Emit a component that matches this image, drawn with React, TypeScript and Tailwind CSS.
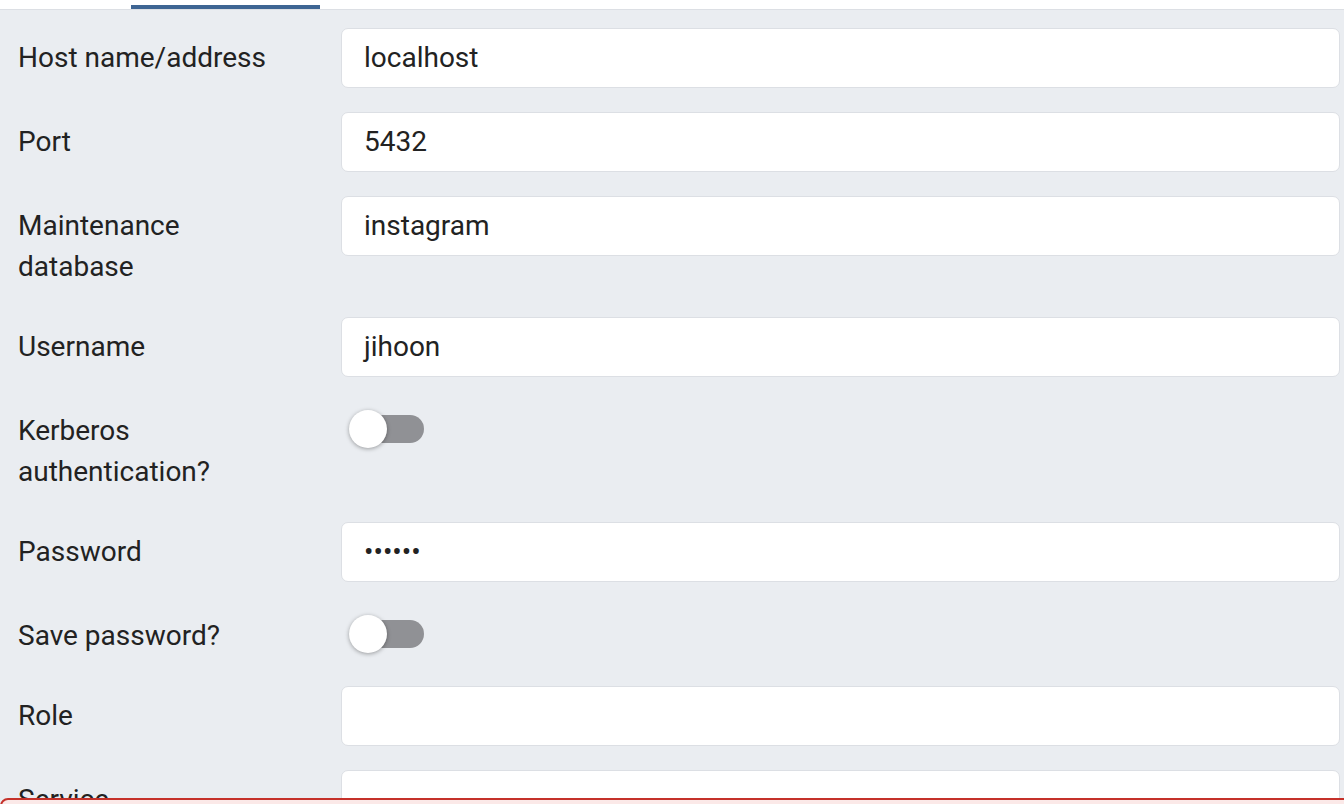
import React from "react";

type Row =
  | { kind: "input"; label: string; value: string }
  | { kind: "switch"; label: string };

const ROWS: Row[] = [
  { kind: "input", label: "Host name/address", value: "localhost" },
  { kind: "input", label: "Port", value: "5432" },
  { kind: "input", label: "Maintenance database", value: "instagram" },
  { kind: "input", label: "Username", value: "jihoon" },
  { kind: "switch", label: "Kerberos authentication?" },
  { kind: "input", label: "Password", value: "••••••" },
  { kind: "switch", label: "Save password?" },
  { kind: "input", label: "Role", value: "" },
  { kind: "input", label: "Service", value: "" },
];

function Toggle() {
  return (
    <div className="relative w-[85px] h-[56px] flex items-center">
      <div className="absolute left-[10px] right-[2px] h-[28px] rounded-full bg-[#909195]" />
      <div className="relative ml-[8px] w-[38px] h-[38px] rounded-full bg-white shadow-[0_1px_4px_rgba(0,0,0,0.35)]" />
    </div>
  );
}

export default function App() {
  return (
    <div
      className="relative w-[1344px] h-[804px] overflow-hidden bg-[#eaedf1] text-[#222222]"
      style={{ fontFamily: "Roboto, 'Liberation Sans', sans-serif" }}
    >
      {/* tab strip */}
      <div className="h-[10px] bg-white border-b border-[#dcdfe4] flex items-end">
        <div className="ml-[131px] w-[189px] h-[4px] bg-[#3e6593]" />
      </div>

      <div className="pt-[18px] pr-[4px]">
        {ROWS.map((r) => (
          <div key={r.label} className="flex items-start mb-[24px]">
            <div className="w-[341px] shrink-0 pl-[18px] pr-[50px] pt-[9px] pb-[6px] text-[28px] leading-[41px]">
              {r.label}
            </div>
            {r.kind === "input" ? (
              <div className="flex-1 h-[60px] rounded-[7px] border border-[#dcdfe4] bg-white flex items-center pl-[22px] text-[28px]">
                {r.value}
              </div>
            ) : (
              <Toggle />
            )}
          </div>
        ))}
      </div>

      {/* error banner peeking at the bottom */}
      <div className="absolute left-0 right-[-10px] top-[798px] h-[40px] rounded-tl-[8px] border-2 border-[#c5312a] bg-[#fbe9e8]" />
    </div>
  );
}
